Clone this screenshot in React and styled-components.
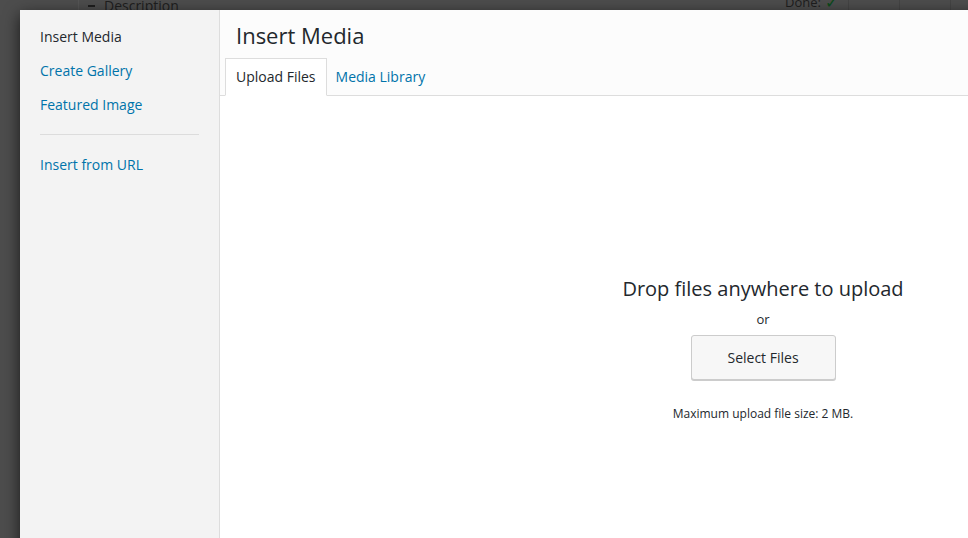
import React from 'react';
import styled, { createGlobalStyle } from 'styled-components';

const GlobalStyle = createGlobalStyle`
    html, body {
        margin: 0;
        padding: 0;
        overflow: hidden;
        background: #4d4d4d;
    }

    body {
        font-family: 'Open Sans', 'Liberation Sans', sans-serif;
        -webkit-font-smoothing: antialiased;
    }
`;

const Screen = styled.div`
    position: relative;
    width: 968px;
    height: 538px;
    overflow: hidden;
    background: #4d4d4d;
`;

const BehindPage = styled.div`
    position: absolute;
    top: -10px;
    left: 78px;
    right: 0;
    height: 30px;
    display: flex;
    align-items: flex-start;
    border-left: 1px solid #555;

    .postbox {
        width: 770px;
        height: 30px;
        display: flex;
        justify-content: space-between;
        padding: 2px 10px 0 9px;
        box-sizing: border-box;
        border-right: 1px solid #444;
        font-size: 14px;
        line-height: 20px;
        color: #1e1e1e;
    }

    .title {
        display: flex;
        gap: 9px;
        align-items: center;
    }

    .dash {
        width: 7px;
        height: 2px;
        background: #1e1e1e;
    }

    .done {
        font-size: 13px;
        display: flex;
        gap: 4px;
    }

    .check {
        color: #0b4a1a;
        font-size: 16px;
    }

    .col {
        width: 50px;
        height: 30px;
        border-right: 1px solid #444;
    }
`;

const Modal = styled.div`
    position: absolute;
    top: 10px;
    left: 20px;
    width: 1286px;
    height: 600px;
    display: flex;
    box-shadow: 0 5px 15px rgba(0, 0, 0, 0.7);
`;

const Sidebar = styled.nav`
    width: 199px;
    flex-shrink: 0;
    background: #f3f3f3;
    border-right: 1px solid #ddd;
    padding: 10px 0;
    box-sizing: content-box;
`;

const MenuItem = styled.div`
    padding: 7px 20px;
    font-size: 14px;
    line-height: 20px;
    color: ${({ active }) => (active ? '#23282d' : '#0073aa')};
`;

const Separator = styled.div`
    height: 1px;
    margin: 12px 20px 13px;
    background: #dcdcdc;
`;

const Main = styled.div`
    flex: 1;
    display: flex;
    flex-direction: column;
    background: #fff;
`;

const Header = styled.header`
    background: #fcfcfc;
    border-bottom: 1px solid #ddd;
    padding: 0 0 0 5px;
`;

const Title = styled.h1`
    margin: 0;
    padding: 10px 11px 0;
    font-size: 22px;
    font-weight: 400;
    line-height: 30px;
    color: #23282d;
`;

const Tabs = styled.div`
    display: flex;
    margin-top: 8px;
    margin-bottom: -1px;
`;

const Tab = styled.div`
    padding: 8px 10px 8px ${({ active }) => (active ? '10px' : '8px')};
    font-size: 14px;
    line-height: 20px;
    border: 1px solid ${({ active }) => (active ? '#ddd' : 'transparent')};
    border-bottom-color: ${({ active }) => (active ? '#fff' : 'transparent')};
    background: ${({ active }) => (active ? '#fff' : 'transparent')};
    color: ${({ active }) => (active ? '#23282d' : '#0073aa')};
`;

const UploadArea = styled.div`
    flex: 1;
    display: flex;
    flex-direction: column;
    align-items: center;
    padding-top: 179px;
    color: #23282d;
`;

const DropText = styled.h2`
    margin: 0;
    font-size: 20px;
    font-weight: 400;
    line-height: 28px;
`;

const Or = styled.p`
    margin: 7px 0 7px;
    font-size: 13px;
    line-height: 18px;
`;

const SelectButton = styled.button`
    width: 145px;
    height: 45px;
    font-family: inherit;
    font-size: 14px;
    color: #23282d;
    background: #f7f7f7;
    border: 1px solid #ccc;
    border-radius: 3px;
    box-shadow: 0 1px 0 #ccc;
`;

const MaxSize = styled.p`
    margin: 25px 0 0;
    font-size: 12px;
    line-height: 18px;
`;

const App = () => (
    <>
        <GlobalStyle />
        <Screen>
            <BehindPage>
                <div className="postbox">
                    <div className="title">
                        <span className="dash" />
                        Description
                    </div>
                    <div className="done">
                        Done: <span className="check">✓</span>
                    </div>
                </div>
                <div className="col" />
                <div className="col" />
            </BehindPage>
            <Modal>
                <Sidebar>
                    <MenuItem active>Insert Media</MenuItem>
                    <MenuItem>Create Gallery</MenuItem>
                    <MenuItem>Featured Image</MenuItem>
                    <Separator />
                    <MenuItem>Insert from URL</MenuItem>
                </Sidebar>
                <Main>
                    <Header>
                        <Title>Insert Media</Title>
                        <Tabs>
                            <Tab active>Upload Files</Tab>
                            <Tab>Media Library</Tab>
                        </Tabs>
                    </Header>
                    <UploadArea>
                        <DropText>Drop files anywhere to upload</DropText>
                        <Or>or</Or>
                        <SelectButton>Select Files</SelectButton>
                        <MaxSize>Maximum upload file size: 2 MB.</MaxSize>
                    </UploadArea>
                </Main>
            </Modal>
        </Screen>
    </>
);

export default App;
